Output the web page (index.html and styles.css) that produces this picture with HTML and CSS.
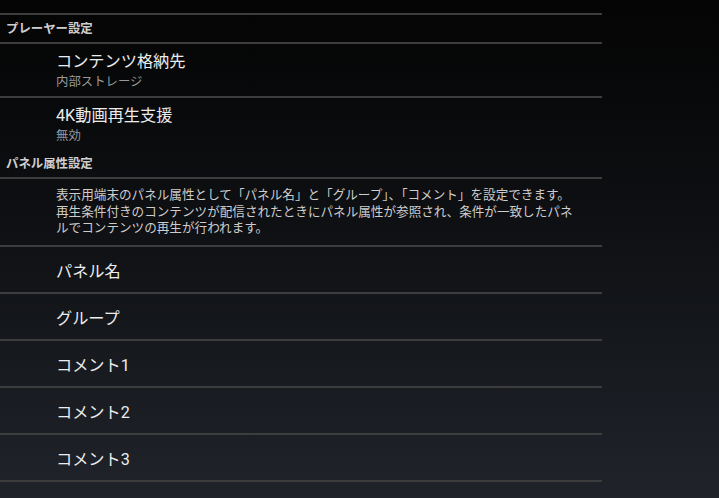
FILE: index.html
```html
<!DOCTYPE html>
<html lang="ja">
<head>
    <meta charset="UTF-8">
    <meta name="viewport" content="width=device-width, initial-scale=1.0">
    <title>設定</title>
    <link rel="stylesheet" href="styles.css">
</head>
<body>
    <div class="prefs">
        <div class="top-edge"></div>

        <div class="category">プレーヤー設定</div>
        <div class="pref with-line">
            <div class="title">コンテンツ格納先</div>
            <div class="summary">内部ストレージ</div>
        </div>
        <div class="pref">
            <div class="title">4K動画再生支援</div>
            <div class="summary">無効</div>
        </div>

        <div class="category">パネル属性設定</div>
        <div class="desc">
            表示用端末のパネル属性として「パネル名」と「グループ」、「コメント」を設定できます。<br>
            再生条件付きのコンテンツが配信されたときにパネル属性が参照され、条件が一致したパネ<br>
            ルでコンテンツの再生が行われます。
        </div>
        <div class="row">パネル名</div>
        <div class="row">グループ</div>
        <div class="row">コメント1</div>
        <div class="row">コメント2</div>
        <div class="row">コメント3</div>
    </div>
</body>
</html>
```

FILE: styles.css
```css
* {
    margin: 0;
    padding: 0;
    box-sizing: border-box;
}

body {
    font-family: Roboto, "Noto Sans CJK JP", sans-serif;
    background: linear-gradient(180deg, #040404 0%, #0e1013 45%, #20232a 100%);
    min-height: 100vh;
    color: #eaeaea;
}

.prefs {
    width: 602px;
    display: flex;
    flex-direction: column;
}

.top-edge {
    height: 15px;
    border-bottom: 2px solid #3d3d3d;
}

.category {
    height: 29px;
    display: flex;
    align-items: center;
    padding-left: 6px;
    padding-bottom: 2px;
    font-size: 12.4px;
    font-weight: 700;
    color: #cfcfcf;
    border-bottom: 2px solid #3d3d3d;
}

.pref {
    height: 52px;
    padding: 7px 0 0 56px;
}

.pref.with-line {
    height: 54px;
    border-bottom: 2px solid #3d3d3d;
}

.pref .title {
    font-size: 16.2px;
    line-height: 22px;
    color: #ececec;
}

.pref .summary {
    font-size: 12.4px;
    line-height: 18px;
    color: #9a9a9a;
}

.desc {
    height: 68px;
    display: flex;
    align-items: center;
    padding-left: 56px;
    font-size: 12.6px;
    line-height: 16.5px;
    color: #cdcdcd;
    white-space: nowrap;
    border-bottom: 2px solid #3d3d3d;
}

.row {
    height: 47px;
    display: flex;
    align-items: center;
    padding-left: 56px;
    font-size: 16.2px;
    color: #ececec;
    border-bottom: 2px solid #3d3d3d;
}
```
